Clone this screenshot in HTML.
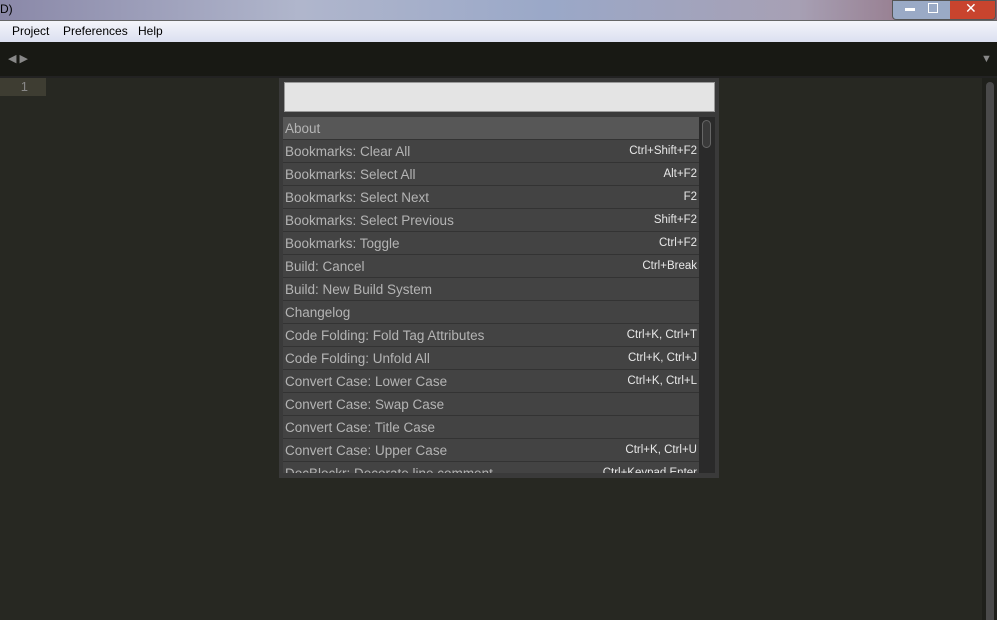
<!DOCTYPE html><html><head><style>
body{margin:0;width:997px;height:620px;overflow:hidden;background:#272822;font-family:"Liberation Sans","DejaVu Sans",sans-serif;position:relative}
.a{position:absolute}
.row{position:absolute;left:283px;width:416px;height:22px;background:#434343;border-bottom:1px solid #333;color:#b4b4b4;font-size:13.5px;line-height:23px}
.row span{position:absolute;left:2px}
.row b{position:absolute;right:2px;font-weight:normal;font-size:11.5px;color:#e8e8e8}
</style></head><body>
<div class="a" style="left:0;top:0;width:997px;height:20px;background:linear-gradient(90deg,#8a88a8,#b0b6cc 30%,#9aa8c8 55%,#a7a0b4 80%,#8a6070);"></div>
<div class="a" style="left:0;top:0;font-size:12px;line-height:18px">D)</div>
<div class="a" style="left:892px;top:0;width:102px;height:18px;border-radius:0 0 4px 4px;background:linear-gradient(90deg,#9aaac6 0,#9aaac6 56%,#c8442e 56%);border:1px solid #555"></div>
<div class="a" style="left:905px;top:8px;width:10px;height:3px;background:#fff"></div>
<div class="a" style="left:928px;top:3px;width:8px;height:8px;border:1px solid #fff"></div>
<div class="a" style="left:965px;top:0;color:#fff;font-size:14px;font-weight:bold">✕</div>
<div class="a" style="left:0;top:20px;width:997px;height:21px;background:linear-gradient(#f4f5fa,#dbe0f0);border-top:1px solid #666;border-bottom:1px solid #a0a8c0;font-size:12px;line-height:21px">
<span class="a" style="left:12px">Project</span><span class="a" style="left:63px">Preferences</span><span class="a" style="left:138px">Help</span></div>
<div class="a" style="left:0;top:42px;width:997px;height:34px;background:#181914;border-bottom:2px solid #222"></div>
<div class="a" style="left:8px;top:52px;color:#888;font-size:11px">◀ ▶</div>
<div class="a" style="left:981px;top:53px;color:#888;font-size:11px">▼</div>
<div class="a" style="left:0;top:78px;width:46px;height:18px;background:#3e3d32;color:#888;font-size:13px;line-height:18px;text-align:right;box-sizing:border-box;padding-right:18px">1</div>
<div class="a" style="left:982px;top:78px;width:15px;height:542px;background:#1f201b"></div>
<div class="a" style="left:986px;top:82px;width:8px;height:538px;background:#4a4a4a;border-radius:4px 4px 0 0"></div>
<div class="a" style="left:279px;top:78px;width:440px;height:400px;background:#3a3a3a"></div>
<div class="a" style="left:284px;top:82px;width:429px;height:28px;background:#e4e4e4;border:1px solid #999"></div>
<div class="a" style="left:283px;top:117px;width:432px;height:356px;overflow:hidden">
<div style="position:relative;left:-283px;top:-117px">
<div class="row" style="top:117px;background:#575757"><span>About</span></div>
<div class="row" style="top:140px"><span>Bookmarks: Clear All</span><b>Ctrl+Shift+F2</b></div>
<div class="row" style="top:163px"><span>Bookmarks: Select All</span><b>Alt+F2</b></div>
<div class="row" style="top:186px"><span>Bookmarks: Select Next</span><b>F2</b></div>
<div class="row" style="top:209px"><span>Bookmarks: Select Previous</span><b>Shift+F2</b></div>
<div class="row" style="top:232px"><span>Bookmarks: Toggle</span><b>Ctrl+F2</b></div>
<div class="row" style="top:255px"><span>Build: Cancel</span><b>Ctrl+Break</b></div>
<div class="row" style="top:278px"><span>Build: New Build System</span></div>
<div class="row" style="top:301px"><span>Changelog</span></div>
<div class="row" style="top:324px"><span>Code Folding: Fold Tag Attributes</span><b>Ctrl+K, Ctrl+T</b></div>
<div class="row" style="top:347px"><span>Code Folding: Unfold All</span><b>Ctrl+K, Ctrl+J</b></div>
<div class="row" style="top:370px"><span>Convert Case: Lower Case</span><b>Ctrl+K, Ctrl+L</b></div>
<div class="row" style="top:393px"><span>Convert Case: Swap Case</span></div>
<div class="row" style="top:416px"><span>Convert Case: Title Case</span></div>
<div class="row" style="top:439px"><span>Convert Case: Upper Case</span><b>Ctrl+K, Ctrl+U</b></div>
<div class="row" style="top:462px"><span>DocBlockr: Decorate line comment</span><b>Ctrl+Keypad Enter</b></div>
</div>
<div class="a" style="left:416px;top:0;width:16px;height:356px;background:#2a2a2a"></div>
<div class="a" style="left:419px;top:3px;width:9px;height:28px;background:#3a3a3a;border:1px solid #666;border-radius:5px;box-sizing:border-box"></div>
</div>
</body></html>
